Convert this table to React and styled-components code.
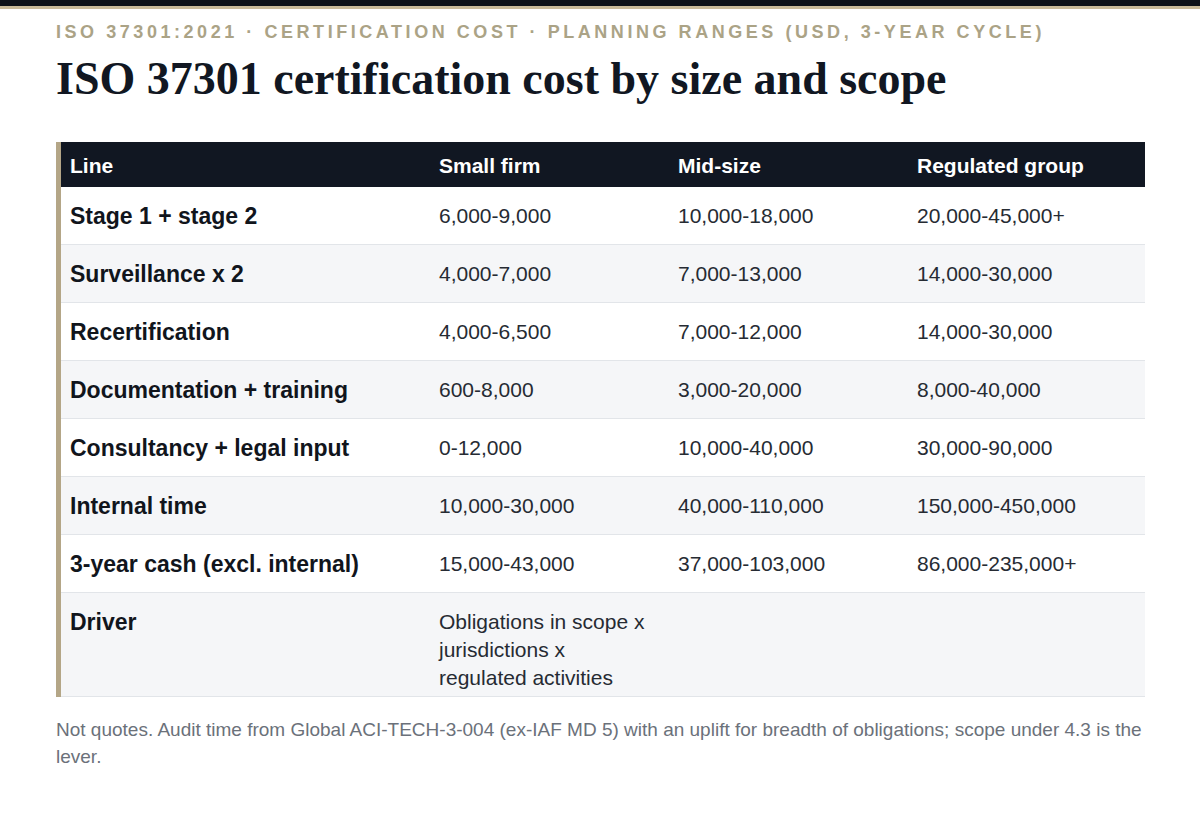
import React from 'react';
import styled, { createGlobalStyle } from 'styled-components';

const GlobalStyle = createGlobalStyle`
  html, body {
    margin: 0;
    padding: 0;
    background: #ffffff;
  }
  body {
    font-family: "Liberation Sans", Arial, sans-serif;
    color: #11151c;
  }
`;

const rows = [
  ['Stage 1 + stage 2', '6,000-9,000', '10,000-18,000', '20,000-45,000+'],
  ['Surveillance x 2', '4,000-7,000', '7,000-13,000', '14,000-30,000'],
  ['Recertification', '4,000-6,500', '7,000-12,000', '14,000-30,000'],
  ['Documentation + training', '600-8,000', '3,000-20,000', '8,000-40,000'],
  ['Consultancy + legal input', '0-12,000', '10,000-40,000', '30,000-90,000'],
  ['Internal time', '10,000-30,000', '40,000-110,000', '150,000-450,000'],
  ['3-year cash (excl. internal)', '15,000-43,000', '37,000-103,000', '86,000-235,000+'],
  ['Driver', 'Obligations in scope x jurisdictions x regulated activities', '', ''],
];

export default function App() {
  return (
    <>
      <GlobalStyle />
      <TopBar />
      <Page>
        <Eyebrow>ISO 37301:2021 · Certification cost · Planning ranges (USD, 3-year cycle)</Eyebrow>
        <Title>ISO 37301 certification cost by size and scope</Title>
        <TableWrap>
          <Table>
            <colgroup>
              <col style={{ width: 369 }} />
              <col style={{ width: 239 }} />
              <col style={{ width: 239 }} />
              <col />
            </colgroup>
            <thead>
              <tr>
                <Th>Line</Th>
                <Th>Small firm</Th>
                <Th>Mid-size</Th>
                <Th>Regulated group</Th>
              </tr>
            </thead>
            <tbody>
              {rows.map((r, i) => {
                const tall = i === rows.length - 1;
                return (
                  <Row key={r[0]} $striped={i % 2 === 1}>
                    <Label $tall={tall}>{r[0]}</Label>
                    <Cell $tall={tall}>{r[1]}</Cell>
                    <Cell $tall={tall}>{r[2]}</Cell>
                    <Cell $tall={tall}>{r[3]}</Cell>
                  </Row>
                );
              })}
            </tbody>
          </Table>
        </TableWrap>
        <Note>
          Not quotes. Audit time from Global ACI-TECH-3-004 (ex-IAF MD 5) with an uplift for breadth of
          obligations; scope under 4.3 is the lever.
        </Note>
      </Page>
    </>
  );
}

const TopBar = styled.div`
  height: 6px;
  background: #0e131b;
  border-bottom: 3px solid #c9bb9b;
`;

const Page = styled.div`
  padding: 11px 55px 40px 56px;
`;

const Eyebrow = styled.div`
  font-size: 18px;
  line-height: 24px;
  font-weight: 700;
  letter-spacing: 3.55px;
  text-transform: uppercase;
  color: #aba386;
  white-space: nowrap;
`;

const Title = styled.h1`
  margin: 7px 0 0;
  font-family: "Liberation Serif", "Times New Roman", serif;
  font-size: 46px;
  line-height: 55px;
  font-weight: 700;
  color: #111722;
`;

const TableWrap = styled.div`
  margin-top: 36px;
  border-left: 5px solid #b4a687;
`;

const Table = styled.table`
  width: 100%;
  border-collapse: collapse;
  table-layout: fixed;
`;

const Th = styled.th`
  background: #111722;
  color: #ffffff;
  text-align: left;
  font-size: 21px;
  line-height: 27px;
  font-weight: 700;
  padding: 10px 20px 8px 9px;
`;

const Row = styled.tr`
  background: ${p => (p.$striped ? '#f5f6f8' : '#ffffff')};
  border-bottom: 1px solid #e2e5e9;
`;

const Cell = styled.td`
  vertical-align: top;
  font-size: 21px;
  line-height: 28px;
  color: #262b33;
  padding: 15px 20px ${p => (p.$tall ? '4px' : '14px')} 9px;
`;

const Label = styled(Cell)`
  font-size: 23px;
  font-weight: 700;
  color: #11151c;
`;

const Note = styled.p`
  margin: 19px 0 0;
  font-size: 19px;
  line-height: 27px;
  color: #6b717a;
`;
